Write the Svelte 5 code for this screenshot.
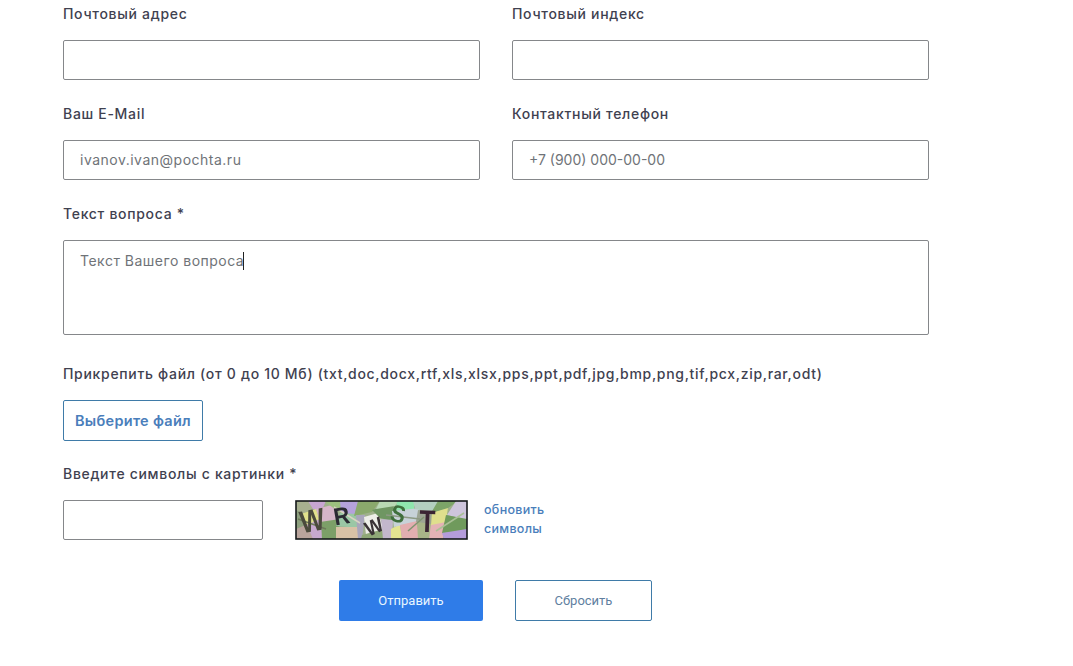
<script>
  const captchaPatches = [
    { points: '0,0 14,0 18,8 6,13 0,9', fill: '#a7b08f' },
    { points: '12,0 30,0 25,11 17,8', fill: '#c8a6d2' },
    { points: '5,13 20,8 24,20 10,24', fill: '#e0e18c' },
    { points: '0,9 6,12 10,25 0,29', fill: '#8da07e' },
    { points: '0,28 12,23 18,38 0,38', fill: '#b9a49c' },
    { points: '11,24 26,17 27,38 17,38', fill: '#c7a9cf' },
    { points: '25,20 46,16 40,38 26,38', fill: '#7c9f68' },
    { points: '20,8 36,4 44,18 24,21', fill: '#d6b6c9' },
    { points: '28,0 46,0 46,12 36,6', fill: '#9cc07f' },
    { points: '44,0 64,0 58,15 45,11', fill: '#b5a2dc' },
    { points: '44,12 60,13 63,27 40,25', fill: '#9ac7a5' },
    { points: '40,26 63,26 66,38 40,38', fill: '#d8c2a6' },
    { points: '62,0 84,0 76,11 58,15', fill: '#8aa96c' },
    { points: '60,14 69,14 66,38 62,38', fill: '#a9a6bb' },
    { points: '68,16 82,12 88,28 70,34', fill: '#edeee8' },
    { points: '66,34 88,28 88,38 65,38', fill: '#8fa877' },
    { points: '76,9 98,3 96,20 84,17', fill: '#6f9662' },
    { points: '85,18 97,19 96,38 87,38', fill: '#c3b7cc' },
    { points: '95,28 104,23 106,38 95,38', fill: '#e3e491' },
    { points: '84,0 103,0 99,5 80,8', fill: '#b9d9b4' },
    { points: '101,0 118,0 118,8 100,10', fill: '#8fe6ad' },
    { points: '96,10 124,7 120,21 98,26', fill: '#c7d2d8' },
    { points: '104,24 121,20 123,38 106,38', fill: '#e2aeb0' },
    { points: '117,0 144,0 136,11 119,8', fill: '#b3cfc0' },
    { points: '122,9 135,11 136,23 120,21', fill: '#9ca493' },
    { points: '121,21 135,23 134,38 122,38', fill: '#a8b488' },
    { points: '135,23 149,20 147,38 133,38', fill: '#e3b3b5' },
    { points: '136,12 152,6 150,21 135,24', fill: '#dfdf8d' },
    { points: '142,0 162,0 152,7 135,12', fill: '#7ca468' },
    { points: '160,0 171,0 171,19 151,14', fill: '#cec5dc' },
    { points: '150,14 171,18 171,30 146,32', fill: '#6f9a5c' },
    { points: '146,32 171,28 171,38 148,38', fill: '#b49cdb' }
  ];

  const captchaStreaks = [
    { d: 'M2 18 L30 28', stroke: '#6d7a5a' },
    { d: 'M38 6 L64 22', stroke: '#d9d3c2' },
    { d: 'M90 14 L124 18', stroke: '#8d9a84' },
    { d: 'M112 30 L128 16', stroke: '#7f9470' },
    { d: 'M140 30 L168 12', stroke: '#a9c096' }
  ];

  const captchaLetters = [
    { char: 'W', x: 18, y: 30, size: 26, scaleY: 1.2, angle: -10, fill: '#4a4a3c' },
    { char: 'R', x: 47, y: 23, size: 22, scaleY: 1.1, angle: -10, fill: '#2b2a33' },
    { char: 'W', x: 81, y: 32, size: 19, scaleY: 1.1, angle: -24, fill: '#3a3336' },
    { char: 'S', x: 100, y: 21, size: 22, scaleY: 1.1, angle: 14, fill: '#3f6f3c' },
    { char: 'T', x: 131, y: 31, size: 26, scaleY: 1.2, angle: 2, fill: '#3a2433' }
  ];
</script>

<main class="page">
  <form class="form">
    <div class="two-cols">
      <div class="field">
        <label for="address">Почтовый адрес</label>
        <input id="address" type="text" />
      </div>
      <div class="field">
        <label for="zip">Почтовый индекс</label>
        <input id="zip" type="text" />
      </div>
      <div class="field">
        <label for="email">Ваш E-Mail</label>
        <input id="email" type="text" placeholder="ivanov.ivan@pochta.ru" />
      </div>
      <div class="field">
        <label for="phone">Контактный телефон</label>
        <input id="phone" class="phone" type="text" placeholder="+7 (900) 000-00-00" />
      </div>
    </div>

    <div class="field question">
      <label for="question">Текст вопроса *</label>
      <div class="textarea-wrap">
        <textarea id="question" placeholder="Текст Вашего вопроса"></textarea>
        <span class="caret"></span>
      </div>
    </div>

    <div class="field attach">
      <span class="label">Прикрепить файл (от 0 до 10 Мб) (txt,doc,docx,rtf,xls,xlsx,pps,ppt,pdf,jpg,bmp,png,tif,pcx,zip,rar,odt)</span>
      <button type="button" class="file-btn">Выберите файл</button>
    </div>

    <div class="field captcha-field">
      <label for="captcha">Введите символы с картинки *</label>
      <div class="captcha-row">
        <input id="captcha" type="text" />
        <svg class="captcha" width="173" height="40" viewBox="-1 -1 173 40" role="img" aria-label="captcha">
          <rect x="0" y="0" width="171" height="38" fill="#9fb08c" />
          {#each captchaPatches as patch}
            <polygon points={patch.points} fill={patch.fill} />
          {/each}
          {#each captchaStreaks as streak}
            <path d={streak.d} stroke={streak.stroke} stroke-width="1.5" fill="none" />
          {/each}
          {#each captchaLetters as letter}
            <text
              font-size={letter.size}
              fill={letter.fill}
              text-anchor="middle"
              transform="translate({letter.x} {letter.y}) rotate({letter.angle}) scale(1 {letter.scaleY})"
            >{letter.char}</text>
          {/each}
          <rect x="0" y="0" width="171" height="38" fill="none" stroke="#14181a" stroke-width="1.6" />
        </svg>
        <a class="refresh" href="#top">обновить<br />символы</a>
      </div>
    </div>

    <div class="actions">
      <button type="submit" class="submit">Отправить</button>
      <button type="reset" class="reset">Сбросить</button>
    </div>
  </form>
</main>

<style>
  :global(body) {
    background: #fff;
    overflow: hidden;
  }

  .page {
    height: 666px;
    padding: 5px 0 0 63px;
    box-sizing: border-box;
    font-family: Inter, "Noto Sans", sans-serif;
    color: #3f4150;
  }

  .form {
    width: 866px;
  }

  .two-cols {
    display: grid;
    grid-template-columns: 417px 417px;
    column-gap: 32px;
    row-gap: 25px;
  }

  .field {
    display: flex;
    flex-direction: column;
    align-items: flex-start;
  }

  label,
  .label {
    display: block;
    height: 18px;
    line-height: 18px;
    margin-bottom: 17px;
    font-size: 14px;
    font-weight: 500;
    letter-spacing: 0.69px;
    white-space: nowrap;
  }

  input,
  textarea {
    display: block;
    box-sizing: border-box;
    width: 100%;
    border: 1px solid #85878a;
    border-radius: 2px;
    background: #fff;
    font-family: inherit;
    font-size: 14px;
    letter-spacing: 0.5px;
    color: #3f4150;
    outline: none;
  }

  input {
    height: 40px;
    padding: 0 16px 2px;
  }

  input.phone {
    letter-spacing: 0;
  }

  input::placeholder,
  textarea::placeholder {
    color: #6f7378;
    opacity: 1;
  }

  .question {
    margin-top: 25px;
  }

  .textarea-wrap {
    position: relative;
    width: 866px;
  }

  textarea {
    height: 95px;
    padding: 11px 16px;
    resize: none;
  }

  .caret {
    position: absolute;
    left: 180px;
    top: 12px;
    width: 1px;
    height: 18px;
    background: #222;
  }

  .attach {
    margin-top: 30px;
  }

  .file-btn {
    width: 140px;
    height: 41px;
    padding: 0;
    border: 1px solid #3f7ba8;
    border-radius: 2px;
    background: #fff;
    font-family: inherit;
    font-size: 14.5px;
    font-weight: 600;
    letter-spacing: 0.3px;
    color: #4a7ebb;
  }

  .captcha-field {
    margin-top: 24px;
  }

  .captcha-row {
    display: flex;
    align-items: center;
  }

  .captcha-row input {
    width: 200px;
    flex: none;
  }

  .captcha {
    margin-left: 32px;
    flex: none;
    font-family: "Liberation Sans", sans-serif;
    font-weight: 700;
    filter: blur(0.6px);
  }

  .refresh {
    margin-left: 16px;
    font-size: 12.5px;
    font-weight: 500;
    line-height: 19px;
    letter-spacing: 0.3px;
    color: #4a7ebb;
    text-decoration: none;
    transform: translateY(-1px);
  }

  .actions {
    display: flex;
    gap: 32px;
    margin: 40px 0 0 276px;
  }

  .actions button {
    height: 41px;
    padding: 0;
    border-radius: 2px;
    font-family: Roboto, sans-serif;
    font-size: 13px;
  }

  .submit {
    width: 144px;
    border: 0;
    background: #2f7ce8;
    color: #e8f6ff;
  }

  .reset {
    width: 137px;
    border: 1px solid #3f7ba8;
    background: #fff;
    color: #5f7f9f;
  }
</style>
